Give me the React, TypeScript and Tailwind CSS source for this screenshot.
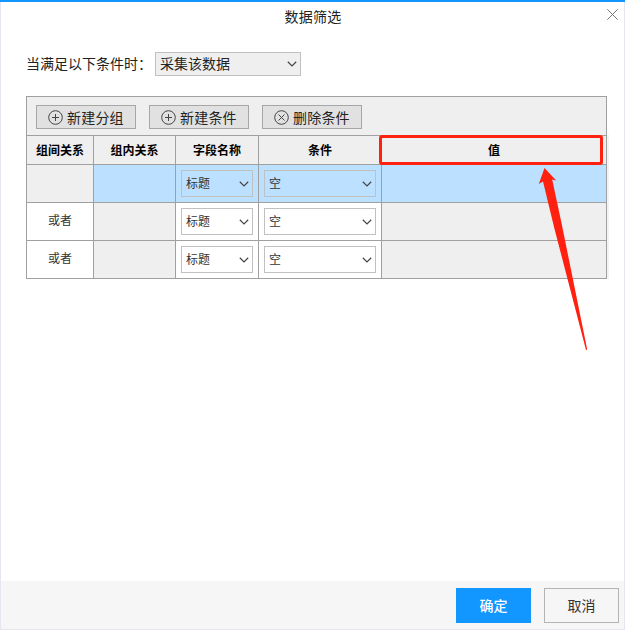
import React from 'react';
import clsx from 'clsx';

interface Condition {
  group: string;
  field: string;
  operator: string;
  selected: boolean;
}

const CONDITIONS: Condition[] = [
  { group: '', field: '标题', operator: '空', selected: true },
  { group: '或者', field: '标题', operator: '空', selected: false },
  { group: '或者', field: '标题', operator: '空', selected: false },
];

const HEADERS = ['组间关系', '组内关系', '字段名称', '条件', '值'];

const Chevron: React.FC = () => (
  <svg width="10" height="6" viewBox="0 0 10 6" fill="none" stroke="#444" strokeWidth="1.2" className="shrink-0">
    <path d="M0.8 0.8 L5 4.9 L9.2 0.8" />
  </svg>
);

interface SelectProps {
  value: string;
  className?: string;
}

const Select: React.FC<SelectProps> = ({ value, className }) => (
  <button
    type="button"
    className={clsx('flex items-center justify-between border border-[#c0c0c0] pr-[3px] pl-1', className)}
  >
    <span className="pb-0.5">{value}</span>
    <Chevron />
  </button>
);

interface ToolButtonProps {
  label: string;
  icon: 'plus' | 'cross';
}

const ToolButton: React.FC<ToolButtonProps> = ({ label, icon }) => (
  <button
    type="button"
    className="flex h-6 w-[100px] items-center border border-[#a6a6a6] bg-[#e1e1e1] pl-[11px] text-sm leading-5 text-[#222]"
  >
    <svg width="15" height="15" viewBox="0 0 15 15" fill="none" stroke="#444" strokeWidth="1" className="mr-1 shrink-0">
      <circle cx="7.5" cy="7.5" r="6.8" />
      {icon === 'plus' ? <path d="M7.5 4 V11 M4 7.5 H11" /> : <path d="M4.5 4.5 L10.5 10.5 M10.5 4.5 L4.5 10.5" />}
    </svg>
    <span className="whitespace-nowrap tracking-[0.2px]">{label}</span>
  </button>
);

const GRID = 'grid grid-cols-[67px_82px_83px_123px_225px]';
const CELL = 'flex items-center justify-center border-r border-b border-[#a0a0a0]';

const ConditionTable: React.FC = () => (
  <div className="w-[583px] text-xs text-[#333]">
    <div className="flex h-[39px] w-[581px] gap-[13px] border border-b-0 border-[#a0a0a0] bg-[#efefef] pt-2 pl-[9px]">
      <ToolButton label="新建分组" icon="plus" />
      <ToolButton label="新建条件" icon="plus" />
      <ToolButton label="删除条件" icon="cross" />
    </div>
    <div className="border-r-2 border-[#f3f3f3]">
      <div className="relative border-t border-l border-[#a0a0a0]">
        <div className={clsx(GRID, 'h-[29px] bg-[#efefef] font-bold text-black')}>
          {HEADERS.map(header => (
            <div key={header} className={CELL}>
              {header}
            </div>
          ))}
        </div>
        {CONDITIONS.map((row, index) => (
          <div key={index} className={clsx(GRID, 'h-[38px]', row.selected ? 'bg-[#bce0ff]' : 'bg-white')}>
            <div className={clsx(CELL, 'pb-[3px]', row.selected && 'bg-[#efefef]')}>{row.group}</div>
            <div className={clsx(CELL, !row.selected && 'bg-[#efefef]')} />
            <div className={CELL}>
              <Select value={row.field} className="h-[27px] w-[72px]" />
            </div>
            <div className={CELL}>
              <Select value={row.operator} className="h-[27px] w-28" />
            </div>
            <div className={clsx(CELL, !row.selected && 'bg-[#efefef]')} />
          </div>
        ))}

        {/* Highlight around the value column, with its pointer */}
        <div className="absolute -top-px left-[352px] h-[30px] w-56 rounded-[3px] border-[3px] border-[#ff2010]" />
        <svg
          width="52"
          height="184"
          viewBox="0 0 52 184"
          className="absolute top-[31px] left-[511px]"
          fill="#ff2010"
        >
          <path d="M6.5 1 L18.2 13.4 L14.2 12.6 L23.5 56 L49.2 182.4 L48 183 L16 60 L5 14.5 L0.8 17 Z" />
        </svg>
      </div>
    </div>
  </div>
);

const App: React.FC = () => (
  <div className="flex h-[630px] w-[625px] flex-col border-x border-b border-[#e4e7f1] bg-white font-['Noto_Sans_CJK_SC',sans-serif] text-sm text-[#222]">
    <div className="-mx-px h-0.5 shrink-0 bg-[#1296ff]" />
    <header className="flex h-[50px] shrink-0 items-start">
      <h1 className="flex-1 pt-1 pl-[18px] text-center leading-5 tracking-[0.2px]">数据筛选</h1>
      <button type="button" className="mt-[7px] mr-1.5" aria-label="关闭">
        <svg width="11" height="11" viewBox="0 0 11 11" fill="none" stroke="#777" strokeWidth="1">
          <path d="M0.3 0.3 L10.7 10.7 M10.7 0.3 L0.3 10.7" />
        </svg>
      </button>
    </header>
    <main className="flex-1 pl-[25px]">
      <div className="flex h-6 items-center">
        <span className="w-[129px] pb-0.5 whitespace-nowrap">当满足以下条件时：</span>
        <Select value="采集该数据" className="h-6 w-[146px] bg-[#efefef]" />
      </div>
      <div className="mt-5">
        <ConditionTable />
      </div>
    </main>
    <footer className="flex h-12 shrink-0 items-start justify-end gap-[13px] bg-[#f6f6f6] pt-[7px] pr-[5px]">
      <button type="button" className="h-[35px] w-[75px] bg-[#1296ff] pb-0.5 font-medium text-white">
        确定
      </button>
      <button type="button" className="h-[35px] w-[75px] border border-[#b4b4b4] bg-[#f6f6f6] pb-0.5 text-[#333]">
        取消
      </button>
    </footer>
  </div>
);

export default App;
